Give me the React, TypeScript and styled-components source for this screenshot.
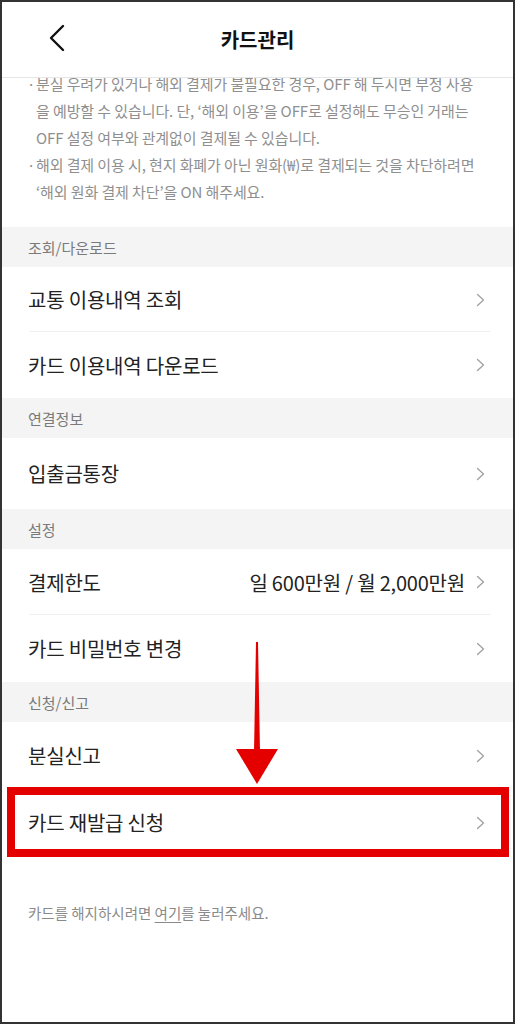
import React from 'react';
import styled, { createGlobalStyle } from 'styled-components';

const GlobalStyle = createGlobalStyle`
  html, body {
    margin: 0;
    padding: 0;
    background: #fff;
  }
  * {
    box-sizing: border-box;
  }
`;

const Frame = styled.div`
  position: relative;
  width: 515px;
  height: 1024px;
  border: 2px solid #333;
  background: #fff;
  overflow: hidden;
  font-family: 'Noto Sans CJK KR', 'Noto Sans', sans-serif;
  display: flex;
  flex-direction: column;
`;

const Header = styled.header`
  position: relative;
  height: 76px;
  flex-shrink: 0;
  display: flex;
  align-items: center;
  justify-content: center;
  border-bottom: 1px solid #e6e6e6;
`;

const BackButton = styled.button`
  position: absolute;
  left: 40px;
  top: 19px;
  width: 30px;
  height: 34px;
  padding: 0;
  border: none;
  background: none;
  display: flex;
  align-items: center;
  justify-content: center;
`;

const Title = styled.h1`
  margin: 0;
  font-size: 20px;
  font-weight: 700;
  color: #111;
`;

const Body = styled.main`
  flex: 1;
  overflow: hidden;
`;

const Notice = styled.ul`
  list-style: none;
  margin: -8px 0 0;
  padding: 0 20px 22px 25px;
`;

const NoticeItem = styled.li`
  position: relative;
  padding-left: 9px;
  font-size: 15px;
  line-height: 27px;
  color: #8f8f8f;
  white-space: nowrap;
  letter-spacing: -0.1px;

  &::before {
    content: '·';
    position: absolute;
    left: 0;
    top: 0;
  }
`;

const SectionTitle = styled.div`
  height: 40px;
  display: flex;
  align-items: center;
  padding: 0 26px;
  background: #f4f4f4;
  font-size: 15px;
  color: #7a7a7a;
`;

const Row = styled.div<{ $divider?: boolean; $h: number }>`
  position: relative;
  height: ${(p) => p.$h}px;
  display: flex;
  align-items: center;
  justify-content: space-between;
  padding: 0 28px 0 26px;

  &::after {
    content: '';
    display: ${(p) => (p.$divider ? 'block' : 'none')};
    position: absolute;
    left: 28px;
    right: 23px;
    bottom: 0;
    height: 1px;
    background: #efefef;
  }
`;

const RowLabel = styled.span`
  font-size: 20px;
  color: #222;
  letter-spacing: -0.2px;
`;

const RowRight = styled.span`
  display: flex;
  align-items: center;
  gap: 11px;
`;

const RowValue = styled.span`
  font-size: 20px;
  color: #222;
  letter-spacing: -0.2px;
`;

const Highlight = styled.div`
  position: absolute;
  left: 5px;
  right: 4px;
  top: -2px;
  bottom: -1px;
  border: 8px solid #e50000;
  pointer-events: none;
`;

const Footer = styled.p`
  margin: 0;
  padding: 47px 26px 0;
  font-size: 14.5px;
  line-height: 20px;
  color: #8a8a8a;
`;

const FooterLink = styled.span`
  text-decoration: underline;
  text-underline-offset: 3px;
`;

const ArrowMark = styled.svg`
  position: absolute;
  left: 232px;
  top: 638px;
  width: 46px;
  height: 146px;
  pointer-events: none;
`;

const Chevron = () => (
  <svg width="9" height="14" viewBox="0 0 9 14" fill="none">
    <path d="M1.5 1.5 L7.5 7 L1.5 12.5" stroke="#a0a0a0" strokeWidth="1.3" strokeLinecap="round" strokeLinejoin="round" />
  </svg>
);

const BackIcon = () => (
  <svg width="18" height="28" viewBox="0 0 18 28" fill="none">
    <path d="M15 2 L3 14 L15 26" stroke="#111" strokeWidth="2.4" strokeLinecap="round" strokeLinejoin="round" />
  </svg>
);

type Item = { label: string; value?: string };

const ListRow = ({ item, divider, h }: { item: Item; divider?: boolean; h: number }) => (
  <Row $divider={divider} $h={h}>
    <RowLabel>{item.label}</RowLabel>
    <RowRight>
      {item.value && <RowValue>{item.value}</RowValue>}
      <Chevron />
    </RowRight>
  </Row>
);

const App: React.FC = () => (
  <>
    <GlobalStyle />
    <Frame>
      <Header>
        <BackButton aria-label="뒤로">
          <BackIcon />
        </BackButton>
        <Title>카드관리</Title>
      </Header>
      <Body>
        <Notice>
          <NoticeItem>
            분실 우려가 있거나 해외 결제가 불필요한 경우, OFF 해 두시면 부정 사용
            <br />을 예방할 수 있습니다. 단, ‘해외 이용’을 OFF로 설정해도 무승인 거래는
            <br />
            OFF 설정 여부와 관계없이 결제될 수 있습니다.
          </NoticeItem>
          <NoticeItem>
            해외 결제 이용 시, 현지 화폐가 아닌 원화(₩)로 결제되는 것을 차단하려면
            <br />
            ‘해외 원화 결제 차단’을 ON 해주세요.
          </NoticeItem>
        </Notice>

        <SectionTitle>조회/다운로드</SectionTitle>
        <ListRow item={{ label: '교통 이용내역 조회' }} divider h={65} />
        <ListRow item={{ label: '카드 이용내역 다운로드' }} h={66} />

        <SectionTitle>연결정보</SectionTitle>
        <ListRow item={{ label: '입출금통장' }} h={71} />

        <SectionTitle>설정</SectionTitle>
        <ListRow item={{ label: '결제한도', value: '일 600만원 / 월 2,000만원' }} divider h={66} />
        <ListRow item={{ label: '카드 비밀번호 변경' }} h={67} />

        <SectionTitle>신청/신고</SectionTitle>
        <ListRow item={{ label: '분실신고' }} h={67} />
        <Row $h={67}>
          <RowLabel>카드 재발급 신청</RowLabel>
          <Chevron />
          <Highlight />
        </Row>

        <Footer>
          카드를 해지하시려면 <FooterLink>여기</FooterLink>를 눌러주세요.
        </Footer>
      </Body>

      <ArrowMark viewBox="0 0 46 146">
        <polygon points="22,2 24,2 26,112 20,112" fill="#e50000" />
        <polygon points="2,109 44,109 23,144" fill="#e50000" />
      </ArrowMark>
    </Frame>
  </>
);

export default App;
